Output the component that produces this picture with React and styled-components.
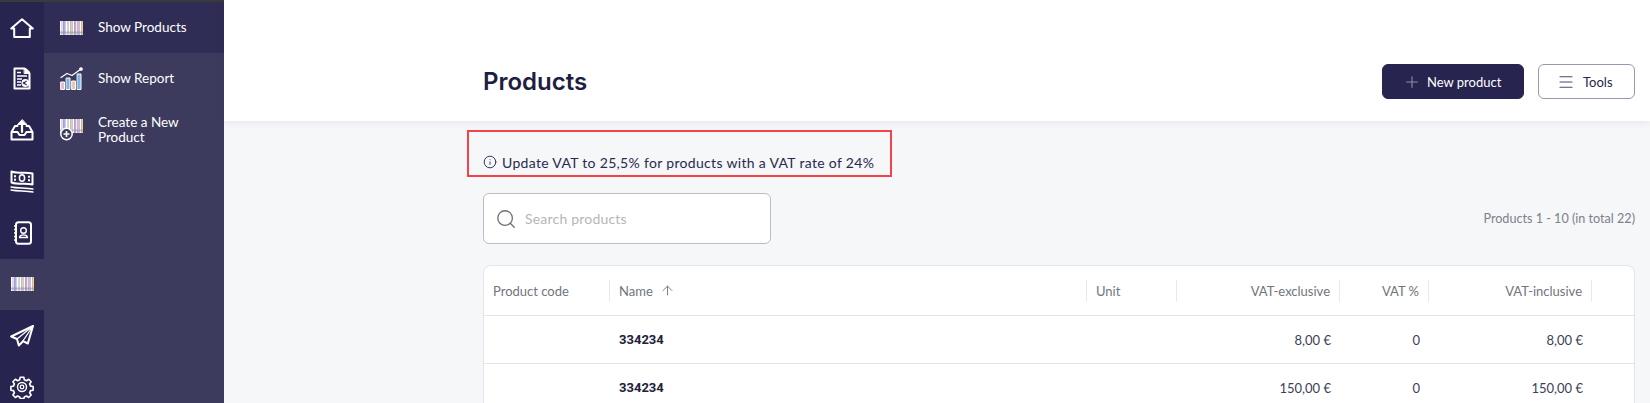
import React from "react";
import styled, { createGlobalStyle } from "styled-components";
import { Plus, Menu, Search, Info, ArrowUp } from "lucide-react";

const Global = createGlobalStyle`
  html, body { margin: 0; padding: 0; height: 403px; overflow: hidden; background: #f5f7f9; }
  * { box-sizing: border-box; }
  body { font-family: Lato, "Open Sans", sans-serif; color: #24244a; }
`;

const Shell = styled.div`
  display: flex;
  height: 403px;
  overflow: hidden;
`;

const Rail = styled.nav`
  flex: 0 0 44px;
  background: #27254f;
  border-top: 2px solid #3b3b3d;
`;

const RailItem = styled.div`
  height: 51.33px;
  display: flex;
  align-items: center;
  justify-content: center;
  background: ${(p) => (p.$active ? "#3d3b5d" : "transparent")};
`;

const SidePanel = styled.aside`
  flex: 0 0 180px;
  background: #3d3b5d;
  border-top: 2px solid #3b3b3d;
`;

const PanelItem = styled.a`
  display: flex;
  align-items: center;
  gap: 15px;
  height: ${(p) => p.$h}px;
  padding-left: 16px;
  background: ${(p) => (p.$active ? "#2f2d55" : "transparent")};
  color: #fff;
  font-size: 13.5px;
  line-height: 15px;
`;

const PanelIcon = styled.span`
  flex: 0 0 23px;
  display: flex;
`;

const Main = styled.main`
  flex: 1;
  min-width: 0;
`;

const TopBar = styled.header`
  height: 121px;
  padding: 64px 15px 0 259px;
  display: flex;
  align-items: flex-start;
  justify-content: space-between;
  background: #fff;
  box-shadow: 0 1px 8px rgba(30, 40, 60, 0.09);
`;

const Title = styled.h1`
  margin: 0;
  height: 35px;
  line-height: 35px;
  font-family: Inter, sans-serif;
  font-size: 24px;
  font-weight: 600;
  color: #1e1e42;
`;

const Actions = styled.div`
  display: flex;
  gap: 14px;
`;

const Button = styled.button`
  height: 35px;
  width: ${(p) => p.$w}px;
  padding: 0 0 0 ${(p) => p.$shift}px;
  display: flex;
  align-items: center;
  gap: ${(p) => p.$gap}px;
  border-radius: 6px;
  font-family: inherit;
  font-size: 13px;
  border: 1px solid ${(p) => (p.$primary ? "#27254f" : "#9a98ae")};
  background: ${(p) => (p.$primary ? "#27254f" : "#fff")};
  color: ${(p) => (p.$primary ? "#fff" : "#27254f")};
  svg { color: ${(p) => (p.$primary ? "#8e8da6" : "#4a4968")}; }
`;

const Content = styled.section`
  padding: 9px 15px 0 259px;
`;

const Notice = styled.div`
  width: 425px;
  height: 47px;
  margin-left: -16px;
  padding: 17px 0 0 14px;
  display: flex;
  align-items: center;
  gap: 5px;
  border: 2px solid #f5424a;
  font-size: 14px;
  letter-spacing: 0.32px;
  color: #2a2a4e;
`;

const SearchRow = styled.div`
  margin-top: 16px;
  display: flex;
  align-items: center;
  justify-content: space-between;
`;

const SearchBox = styled.div`
  width: 288px;
  height: 51px;
  padding-left: 11px;
  display: flex;
  align-items: center;
  gap: 8px;
  background: #fff;
  border: 1px solid #bcbdc2;
  border-radius: 6px;
  color: #6b6d72;
`;

const Placeholder = styled.span`
  font-size: 14px;
  letter-spacing: 0.2px;
  color: #b4b6ba;
`;

const Pager = styled.span`
  font-size: 12.6px;
  color: #7b8289;
`;

const Card = styled.div`
  margin-top: 21px;
  background: #fff;
  border: 1px solid #e3e5e8;
  border-radius: 8px 8px 0 0;
`;

const Row = styled.div`
  display: grid;
  grid-template-columns: 126px 477px 90px 163px 89px 163px 1fr;
  align-items: center;
  height: ${(p) => p.$h}px;
  border-bottom: 1px solid #e3e5e8;
`;

const Head = styled.div`
  height: 22px;
  padding: 0 9px;
  display: flex;
  align-items: center;
  justify-content: ${(p) => (p.$right ? "flex-end" : "flex-start")};
  gap: 7px;
  font-size: 13px;
  color: #71757c;
  border-right: ${(p) => (p.$last ? "0" : "1px solid #e8e9ec")};
`;

const Cell = styled.div`
  padding: 0 9px;
  font-size: 13px;
  text-align: ${(p) => (p.$right ? "right" : "left")};
  color: #3d3e58;
`;

const Name = styled(Cell)`
  font-family: Roboto, sans-serif;
  font-weight: 700;
  color: #20203a;
`;

/* Drawn icons */
const W = { fill: "none", stroke: "#fff", strokeWidth: 2, strokeLinejoin: "round", strokeLinecap: "round", style: { display: "block" } };

const HomeIcon = () => (
  <svg width="24" height="20" viewBox="0 0 24 20" {...W}>
    <path d="M1.200 10.500 12 1.200l10.800 9.300h-3V19H4.200v-8.500z" />
  </svg>
);
const InvoiceIcon = () => (
  <svg width="18" height="23" viewBox="0 0 18 23" {...W}>
    <path d="M1.500 1.500h10l5 5v15h-15z" />
    <path d="M11.500 1.500h1.500l3.500 3.500v1.500h-5z" fill="#fff" strokeWidth="1" />
    <path d="M4 5.500h4M4 9h10M4 12h5M4 15h4M4 18h4" strokeWidth="1.300" strokeLinecap="butt" />
    <circle cx="12.300" cy="16" r="3.900" fill="#fff" stroke="none" />
    <path d="M14 14.300h-1.700l-1 1.700 1 1.700H14M9.800 15.400h2.800M9.800 16.600h2.800" stroke="#27254f" strokeWidth=".9" strokeLinecap="butt" />
  </svg>
);
const InboxIcon = () => (
  <svg width="24" height="22" viewBox="0 0 24 22" {...W}>
    <path d="M1.500 13v7.500h21V13l-3.500-6h-2.500M7.500 7H5l-3.500 6h6l2 3h5l2-3h6" />
    <path d="M12 13V3" strokeWidth="2.200" />
    <path d="M12 .8 7.500 5.500h9z" fill="#fff" strokeWidth="1" />
  </svg>
);
const MoneyIcon = () => (
  <svg width="24" height="23" viewBox="0 0 24 23" {...W}>
    <path d="M1.500 1.500c7 2.500 14 .5 21 2v11c-7-1.500-14 .5-21-2z" />
    <ellipse cx="12" cy="8" rx="2.600" ry="3.300" strokeWidth="1.500" />
    <path d="M5 6v.5M5 9.500v.5M19 6.500v.5M19 10v.5" strokeWidth="2" />
    <path d="M1 17c7 1.500 15 .5 22 2M1 20c7 1.500 15 .5 22 2" strokeWidth="1.300" />
  </svg>
);
const BookIcon = () => (
  <svg width="19" height="24" viewBox="0 0 19 24" {...W}>
    <rect x="3" y="1.200" width="15" height="21.600" rx="2.500" />
    <path d="M1 5h2.500M1 8.500h2.500M1 12h2.500M1 15.500h2.500M1 19h2.500" strokeWidth="1.400" strokeLinecap="butt" />
    <circle cx="10.500" cy="9.500" r="2.800" strokeWidth="1.400" />
    <path d="M6.500 16.500c.5-3.500 7.500-3.500 8 0z" strokeWidth="1.400" />
  </svg>
);
const PlaneIcon = () => (
  <svg width="24" height="22" viewBox="0 0 24 22" {...W}>
    <path d="M23 1 1.200 11.500l5.800 2.500 1.800 6.500 4.200-4.300 4.800 2.300z" />
    <path d="M23 1 7 14M23 1 12.800 16.200" strokeWidth="1.200" />
  </svg>
);
const GearIcon = () => (
  <svg width="24" height="24" viewBox="0 0 24 24" {...W} strokeWidth="1.800">
    <path d="M10 1.500h4l.5 2.800 2.400 1 2.400-1.600 2.700 2.700-1.600 2.400 1 2.400 2.800.5v4l-2.800.5-1 2.400 1.600 2.400-2.700 2.700-2.400-1.600-2.400 1-.5 1.800h-4l-.5-1.800-2.400-1-2.400 1.600-2.700-2.700 1.600-2.400-1-2.400-2.800-.5v-4l2.800-.5 1-2.400-1.600-2.400 2.700-2.700 2.400 1.600 2.400-1z" transform="translate(1.100 .9) scale(.91)" />
    <circle cx="12" cy="12" r="4.500" strokeWidth="1.400" />
    <circle cx="12" cy="12" r="1.800" strokeWidth="1.300" />
  </svg>
);

const bars = ["#fff", "#e6dcf5", "#b7a8e0", "#fff", "#cfe3f5", "#fff", "#eccb95", "#fff", "#c3aee2", "#f4e6f0", "#dcb9d4", "#fff", "#f0cf98"];
const Stripes = ({ h }) =>
  bars.map((c, i) => <rect key={i} x={i * 1.77} y="0" width="1.78" height={h} fill={c} />);

const BarcodeIcon = () => (
  <svg width="23" height="14" viewBox="0 0 23 14" style={{ display: "block" }}>
    <Stripes h={14} />
    <rect x="0" y="10.500" width="23" height="2" fill="#8d8ca6" opacity=".55" />
  </svg>
);
const ChartIcon = () => (
  <svg width="23" height="23" viewBox="0 0 23 23" {...W} strokeWidth="1.300">
    <path d="M1 10.500l6-4 5 2 9-6.500" />
    <circle cx="21" cy="2" r="1.200" fill="#fff" />
    <rect x="1" y="15" width="3.500" height="7.500" fill="#e3bccb" strokeWidth="1" />
    <rect x="6.500" y="11" width="3.500" height="11.500" fill="#7fb4e8" strokeWidth="1" />
    <rect x="12" y="14" width="3.500" height="8.500" fill="#e8c9a0" strokeWidth="1" />
    <rect x="17.500" y="7" width="3.500" height="15.500" fill="#7fb4e8" strokeWidth="1" />
  </svg>
);
const NewBarcodeIcon = () => (
  <svg width="23" height="22" viewBox="0 0 23 22" style={{ display: "block" }}>
    <Stripes h={14} />
    <rect x="0" y="10.500" width="23" height="2" fill="#8d8ca6" opacity=".55" />
    <circle cx="6.500" cy="15" r="5.700" fill="#3d3b5d" stroke="#fff" strokeWidth="1.500" />
    <path d="M6.500 12v6M3.500 15h6" stroke="#fff" strokeWidth="1.600" />
  </svg>
);

const columns = [
  { label: "Product code" },
  { label: "Name", sort: true },
  { label: "Unit" },
  { label: "VAT-exclusive", right: true },
  { label: "VAT %", right: true },
  { label: "VAT-inclusive", right: true },
  { label: "", last: true },
];

const products = [
  { name: "334234", excl: "8,00 €", vat: "0", incl: "8,00 €" },
  { name: "334234", excl: "150,00 €", vat: "0", incl: "150,00 €" },
];

const rail = [HomeIcon, InvoiceIcon, InboxIcon, MoneyIcon, BookIcon, BarcodeIcon, PlaneIcon, GearIcon];

export default function App() {
  return (
    <>
      <Global />
      <Shell>
        <Rail>
          {rail.map((Icon, i) => (
            <RailItem key={i} $active={i === 5}>
              <Icon />
            </RailItem>
          ))}
        </Rail>
        <SidePanel>
          <PanelItem $active $h={51}>
            <PanelIcon><BarcodeIcon /></PanelIcon>
            Show Products
          </PanelItem>
          <PanelItem $h={51}>
            <PanelIcon><ChartIcon /></PanelIcon>
            Show Report
          </PanelItem>
          <PanelItem $h={51}>
            <PanelIcon><NewBarcodeIcon /></PanelIcon>
            <span>Create a New<br />Product</span>
          </PanelItem>
        </SidePanel>
        <Main>
          <TopBar>
            <Title>Products</Title>
            <Actions>
              <Button $primary $w={142} $shift={20} $gap={6}>
                <Plus size={18} strokeWidth={1.5} />
                New product
              </Button>
              <Button $w={97} $shift={18} $gap={8}>
                <Menu size={18} strokeWidth={1.5} />
                Tools
              </Button>
            </Actions>
          </TopBar>
          <Content>
            <Notice>
              <Info size={14} strokeWidth={1.6} />
              Update VAT to 25,5% for products with a VAT rate of 24%
            </Notice>
            <SearchRow>
              <SearchBox>
                <Search size={22} strokeWidth={1.4} />
                <Placeholder>Search products</Placeholder>
              </SearchBox>
              <Pager>Products 1 - 10 (in total 22)</Pager>
            </SearchRow>
            <Card>
              <Row $h={50}>
                {columns.map((c, i) => (
                  <Head key={i} $right={c.right} $last={c.last}>
                    {c.label}
                    {c.sort && <ArrowUp size={15} strokeWidth={1.5} />}
                  </Head>
                ))}
              </Row>
              {products.map((p, i) => (
                <Row key={i} $h={48}>
                  <Cell />
                  <Name>{p.name}</Name>
                  <Cell />
                  <Cell $right>{p.excl}</Cell>
                  <Cell $right>{p.vat}</Cell>
                  <Cell $right>{p.incl}</Cell>
                  <Cell />
                </Row>
              ))}
            </Card>
          </Content>
        </Main>
      </Shell>
    </>
  );
}
